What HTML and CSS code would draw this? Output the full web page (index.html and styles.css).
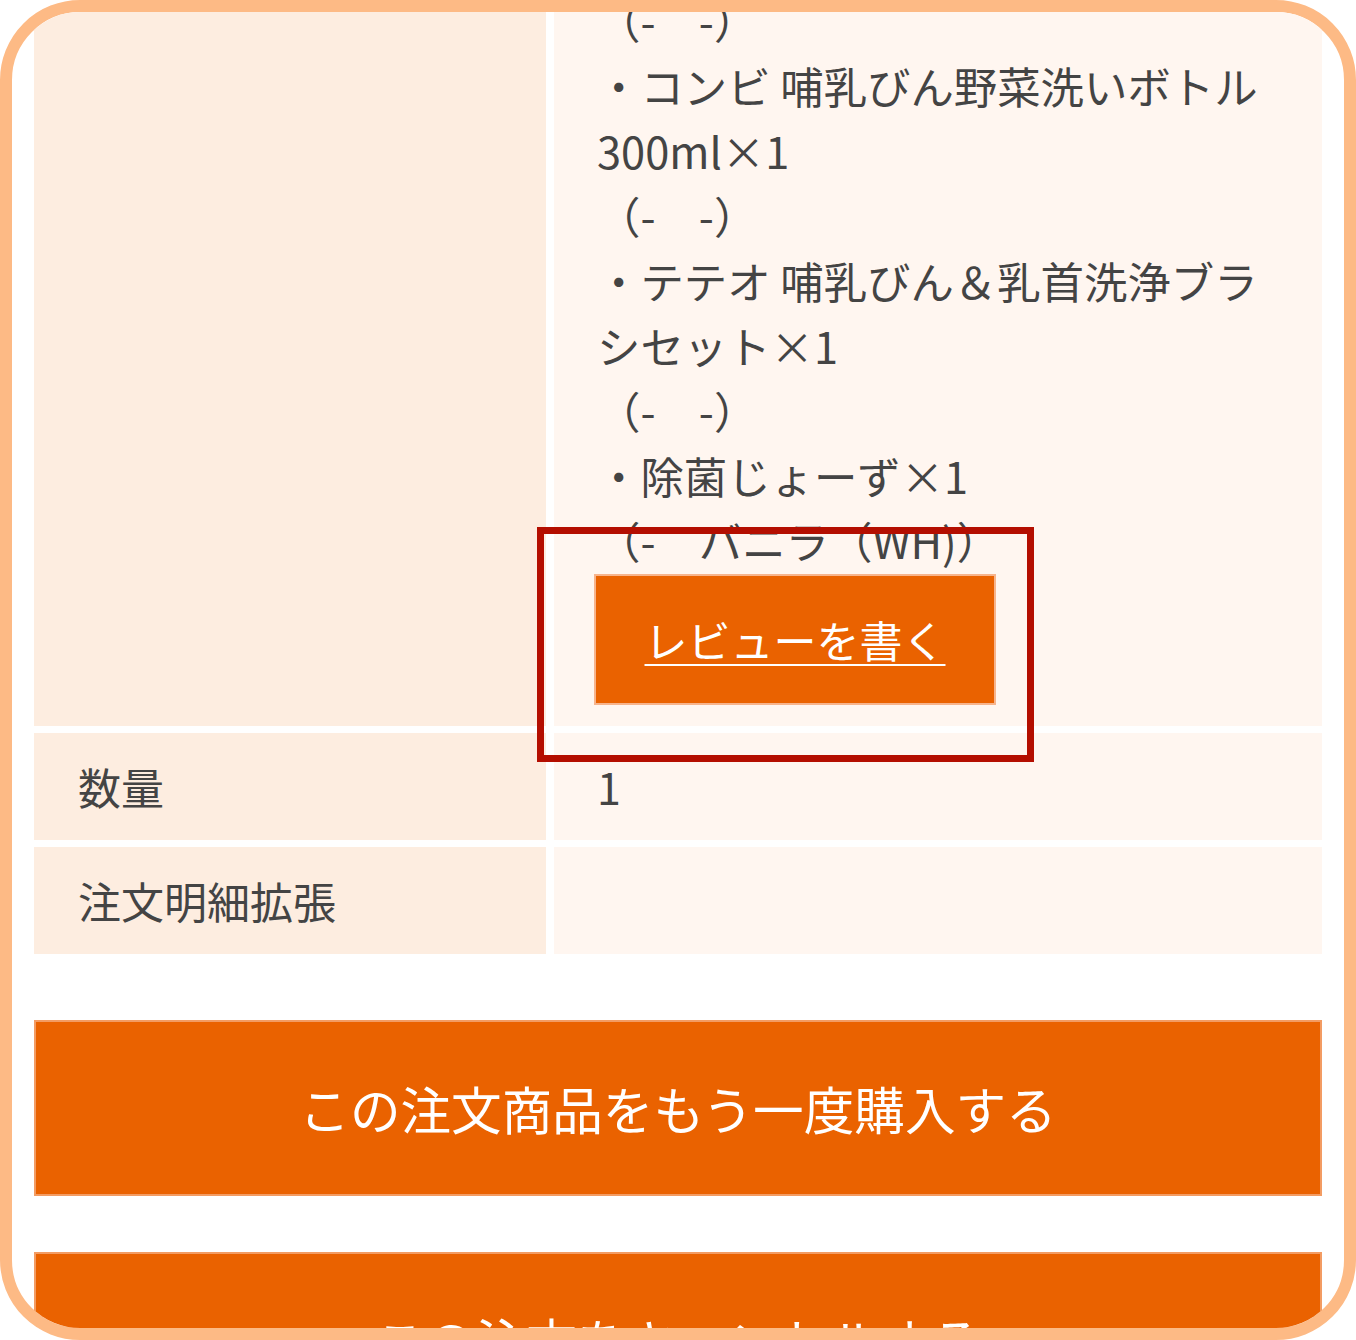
FILE: index.html
```html
<!DOCTYPE html>
<html lang="ja">
<head>
<meta charset="utf-8">
<title>注文詳細</title>
<link rel="stylesheet" href="styles.css">
</head>
<body>
<div class="frame">
  <div class="screen">
    <div class="detail-table">
      <div class="cell cell-head"></div>
      <div class="cell cell-body">
        <p class="items">（-　-）<br>・コンビ 哺乳びん野菜洗いボトル300ml×1<br>（-　-）<br>・テテオ 哺乳びん＆乳首洗浄ブラシセット×1<br>（-　-）<br>・除菌じょーず×1<br>（-　バニラ（WH)）</p>
        <a class="review-btn" href="#">レビューを書く</a>
      </div>
      <div class="cell cell-head">数量</div>
      <div class="cell cell-body"><span class="qty">1</span></div>
      <div class="cell cell-head">注文明細拡張</div>
      <div class="cell cell-body"></div>
    </div>
    <a class="action-btn action-first" href="#">この注文商品をもう一度購入する</a>
    <a class="action-btn action-second" href="#">この注文をキャンセルする</a>
  </div>
  <div class="highlight"></div>
</div>
</body>
</html>
```
FILE: styles.css
```css
* {
  box-sizing: border-box;
}
html, body {
  margin: 0;
  padding: 0;
  background: #ffffff;
}
body {
  font-family: "Noto Sans CJK JP", "Noto Sans", sans-serif;
  color: #444444;
}
.frame {
  position: relative;
  width: 1356px;
  height: 1340px;
  border: 12px solid #fdba85;
  border-radius: 80px;
  overflow: hidden;
  background: #ffffff;
}
.screen {
  padding: 0 22px;
  margin-top: -45.5px;
}
.detail-table {
  display: grid;
  grid-template-columns: 512px 1fr;
  column-gap: 8px;
  row-gap: 7px;
}
.cell {
  padding: 21px 40px;
  font-size: 43px;
  line-height: 65px;
}
.cell-head {
  background: #fdede0;
  padding-left: 44px;
}
.cell-body {
  background: #fff6f0;
}
.items {
  margin: 0 0 0 3px;
  font-size: 43.4px;
  line-height: 65px;
}
.qty {
  padding-left: 3px;
}
.review-btn {
  display: block;
  width: fit-content;
  margin-top: 1px;
  padding: 31px 48.5px;
  background: #ea6200;
  border: 2px solid #f7b48c;
  color: #ffffff;
  text-decoration: underline;
  text-decoration-thickness: 2px;
  text-underline-offset: 6px;
  font-size: 43px;
  line-height: 65px;
}
.action-btn {
  display: block;
  padding: 48.5px 0;
  background: #ea6200;
  border: 2px solid #f39c63;
  color: #ffffff;
  text-decoration: none;
  text-align: center;
  font-size: 50.6px;
  line-height: 75px;
}
.action-first {
  margin-top: 66.5px;
}
.action-second {
  margin-top: 56px;
}
.highlight {
  position: absolute;
  left: 525px;
  top: 515px;
  width: 497px;
  height: 235px;
  border: 7px solid #b40e00;
}
```
